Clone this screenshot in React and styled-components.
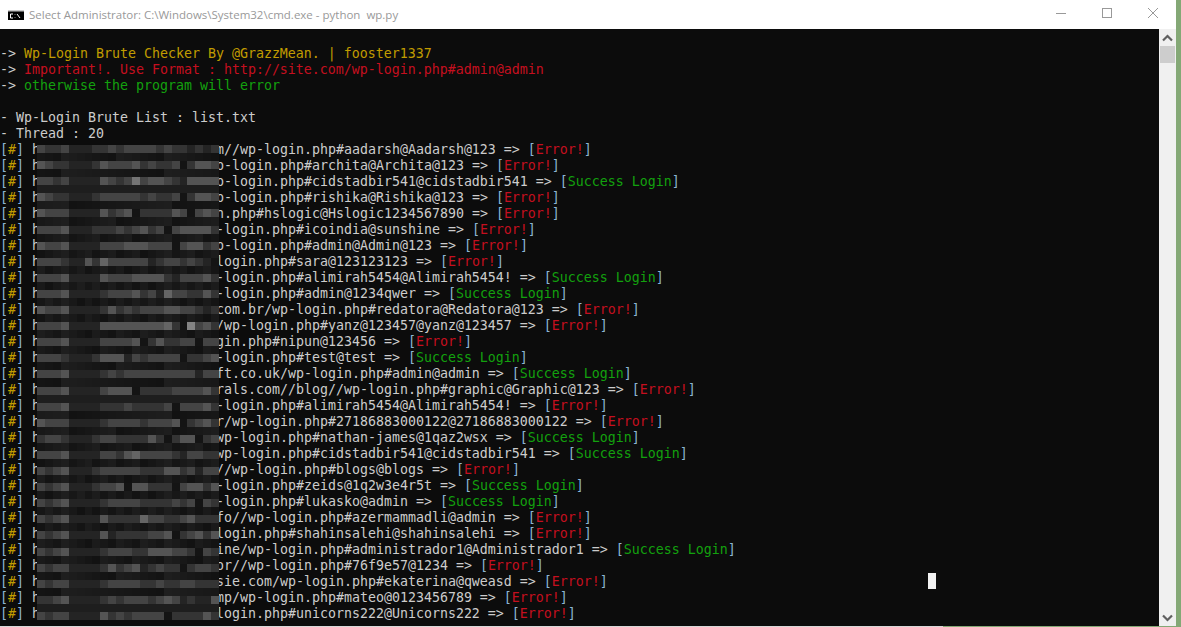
import React from 'react';
import styled, { createGlobalStyle } from 'styled-components';

const GlobalStyle = createGlobalStyle`
  html, body {
    margin: 0;
    padding: 0;
    overflow: hidden;
    background: #84a876;
  }
`;

const Desktop = styled.div`
  width: 1181px;
  height: 627px;
  display: flex;
  flex-direction: column;
  background: #84a876;
`;

const ConsoleWindow = styled.div`
  width: 1176px;
  height: 626px;
  display: flex;
  flex-direction: column;
`;

const BottomEdge = styled.div`
  width: 943px;
  height: 1px;
  background: #d8d8d8;
`;

const TitleBar = styled.div`
  height: 29px;
  flex: none;
  display: flex;
  align-items: center;
  padding-left: 8px;
  background: #fff;
`;

const TitleText = styled.span`
  flex: 1;
  margin-left: 5px;
  font-family: "Open Sans", sans-serif;
  font-size: 11.5px;
  color: #999;
  white-space: pre;
`;

const WindowButton = styled.div`
  width: 46px;
  height: 29px;
  display: flex;
  align-items: center;
  justify-content: center;
  padding-bottom: 3px;
  box-sizing: border-box;
`;

const Body = styled.div`
  flex: 1;
  display: flex;
  min-height: 0;
`;

const Terminal = styled.div`
  position: relative;
  flex: 1;
  overflow: hidden;
  padding-top: 16px;
  background: #0c0c0c;
  color: #ccc;
  font-family: "DejaVu Sans Mono", monospace;
  font-size: 13.29px;
`;

const Line = styled.div`
  height: 16px;
  line-height: 18px;
  white-space: pre;
`;

const Colored = styled.span`
  color: ${({ $tone }) => ({
    yellow: '#c19c00',
    red: '#c50f1f',
    green: '#13a10e',
    blue: '#8db4d4',
  }[$tone])};
`;

const MaskGap = styled.span`
  display: inline-block;
  width: 176px;
`;

const Selection = styled.span`
  display: inline-block;
  width: 8px;
  height: 16px;
  vertical-align: top;
  background: #f2f2f2;
`;

const Mosaic = styled.svg`
  position: absolute;
  left: 37px;
  top: 116px;
`;

const Scrollbar = styled.div`
  width: 17px;
  flex: none;
  display: flex;
  flex-direction: column;
  align-items: center;
  background: #f0f0f0;
`;

const ScrollButton = styled.div`
  height: 17px;
  width: 100%;
  display: flex;
  align-items: center;
  justify-content: center;
`;

const ScrollThumb = styled.div`
  width: 15px;
  height: 17px;
  background: #cdcdcd;
`;

const ScrollTrack = styled.div`
  flex: 1;
`;

const CmdIcon = () => (
  <svg width="16" height="10" viewBox="0 0 16 10">
    <rect width="16" height="10" fill="#000" />
    <rect width="16" height="1.5" fill="#c8c8c8" />
    <path d="M5 4H2.5V8H5M7 4.5V5M7 7V7.5M9 4L12 8" stroke="#fff" strokeWidth="1" fill="none" />
  </svg>
);

const bright = [
  '43342223343444434332323', '54332223544453433413554', '44342222543474554325555',
  '54332223444443433413554', '54442222534513333541454', '44452223334345341455553',
  '54452222444555444145534', '44432253644444234434321', '44452222544455553244453',
  '44452222344453426443353', '54452222353434445544323', '44452222555555556318453',
  '44452222444451353344144', '44432223555243444413345', '44452222343444444444244',
  '44452222455513333444453', '44452222333433334144453', '54442222344443444513453',
  '34432223443333531355134', '44452222443564444324433', '43452223444443335534244',
  '43452223445155333145535', '43452222344443333434143', '43452222533336443345333',
  '43452222523333445134535', '43452222344433555443143', '43442222353452343313443',
  '43442222344443343344333', '33452222343444345423225', '43442222534344441333353',
];

const COLS = 23;
const CELL_W = 7.92;
const CELL_H = 8.05;

// dark rows carry a little noise, fixed so that every render gives the same tiles
const darkShade = (row, col) => {
  const noise = (row * 31 + col * 17 + row * col * 7) % 13;
  return 0x12 + noise;
};

const gray = (value) => {
  const hex = value.toString(16).padStart(2, '0');
  return `#${hex}${hex}${hex}`;
};

const tiles = [];
for (let row = 0; row < bright.length * 2 - 1; row += 1) {
  for (let col = 0; col < COLS; col += 1) {
    const isBright = row % 2 === 0;
    const value = isBright
      ? parseInt(bright[row / 2][col], 16) * 0x10 + 0x04
      : darkShade(row, col);
    tiles.push({ row, col, fill: gray(value) });
  }
}

const rows = [
  'm//wp-login.php#aadarsh@Aadarsh@123|e',
  'p-login.php#archita@Archita@123|e',
  'p-login.php#cidstadbir541@cidstadbir541|s',
  'p-login.php#rishika@Rishika@123|e',
  'n.php#hslogic@Hslogic1234567890|e',
  '-login.php#icoindia@sunshine|e',
  'p-login.php#admin@Admin@123|e',
  'login.php#sara@123123123|e',
  '-login.php#alimirah5454@Alimirah5454!|s',
  '-login.php#admin@1234qwer|s',
  'com.br/wp-login.php#redatora@Redatora@123|e',
  '/wp-login.php#yanz@123457@yanz@123457|e',
  'gin.php#nipun@123456|e',
  '-login.php#test@test|s',
  'ft.co.uk/wp-login.php#admin@admin|s',
  'rals.com//blog//wp-login.php#graphic@Graphic@123|e',
  '-login.php#alimirah5454@Alimirah5454!|e',
  'r/wp-login.php#27186883000122@27186883000122|e',
  'wp-login.php#nathan-james@1qaz2wsx|s',
  'wp-login.php#cidstadbir541@cidstadbir541|s',
  '//wp-login.php#blogs@blogs|e',
  '-login.php#zeids@1q2w3e4r5t|s',
  '-login.php#lukasko@admin|s',
  'fo//wp-login.php#azermammadli@admin|e',
  'login.php#shahinsalehi@shahinsalehi|e',
  'ine/wp-login.php#administrador1@Administrador1|s',
  'or//wp-login.php#76f9e57@1234|e',
  'sie.com/wp-login.php#ekaterina@qweasd|e',
  'mp/wp-login.php#mateo@0123456789|e',
  'login.php#unicorns222@Unicorns222|e',
];

const ResultRow = ({ text, selected }) => {
  const [url, state] = text.split('|');
  const ok = state === 's';
  return (
    <Line>
      <Colored $tone="blue">[</Colored>
      <Colored $tone="yellow">#</Colored>
      <Colored $tone="blue">]</Colored>
      {' h'}
      <MaskGap />
      {url}
      {' => '}
      <Colored $tone="blue">[</Colored>
      <Colored $tone={ok ? 'green' : 'red'}>{ok ? 'Success Login' : 'Error!'}</Colored>
      <Colored $tone="blue">]</Colored>
      {selected && ' '.repeat(40)}
      {selected && <Selection />}
    </Line>
  );
};

const App = () => {
  return (
    <Desktop>
      <GlobalStyle />
      <ConsoleWindow>
        <TitleBar>
          <CmdIcon />
          <TitleText>{'Select Administrator: C:\\Windows\\System32\\cmd.exe - python  wp.py'}</TitleText>
          <WindowButton>
            <svg width="10" height="10" viewBox="0 0 10 10">
              <path d="M0 5.5H10" stroke="#999" />
            </svg>
          </WindowButton>
          <WindowButton>
            <svg width="10" height="10" viewBox="0 0 10 10">
              <rect x="0.5" y="0.5" width="9" height="9" fill="none" stroke="#999" />
            </svg>
          </WindowButton>
          <WindowButton>
            <svg width="10" height="10" viewBox="0 0 10 10">
              <path d="M0 0L10 10M10 0L0 10" stroke="#999" />
            </svg>
          </WindowButton>
        </TitleBar>
        <Body>
          <Terminal>
            <Line>-{'> '}<Colored $tone="yellow">Wp-Login Brute Checker By @GrazzMean. | fooster1337</Colored></Line>
            <Line>-{'> '}<Colored $tone="red">Important!. Use Format : http://site.com/wp-login.php#admin@admin</Colored></Line>
            <Line>-{'> '}<Colored $tone="green">otherwise the program will error</Colored></Line>
            <Line />
            <Line>- Wp-Login Brute List : list.txt</Line>
            <Line>- Thread : 20</Line>
            {rows.map((text, index) => (
              <ResultRow key={index} text={text} selected={index === 27} />
            ))}
            <Mosaic width="182" height="475" viewBox="0 0 182 475" shapeRendering="crispEdges">
              {tiles.map(({ row, col, fill }) => (
                <rect key={`${row}-${col}`} x={col * CELL_W} y={row * CELL_H} width={CELL_W + 0.5} height={CELL_H + 0.5} fill={fill} />
              ))}
            </Mosaic>
          </Terminal>
          <Scrollbar>
            <ScrollButton>
              <svg width="11" height="8" viewBox="0 0 11 8">
                <path d="M1 6.5L5.5 2L10 6.5" fill="none" stroke="#606060" strokeWidth="2.2" />
              </svg>
            </ScrollButton>
            <ScrollThumb />
            <ScrollTrack />
            <ScrollButton>
              <svg width="11" height="8" viewBox="0 0 11 8">
                <path d="M1 1.5L5.5 6L10 1.5" fill="none" stroke="#606060" strokeWidth="2.2" />
              </svg>
            </ScrollButton>
          </Scrollbar>
        </Body>
      </ConsoleWindow>
      <BottomEdge />
    </Desktop>
  );
};

export default App;
